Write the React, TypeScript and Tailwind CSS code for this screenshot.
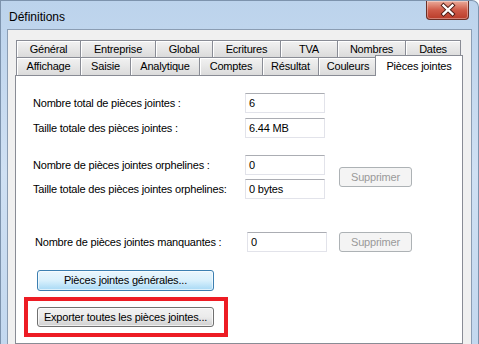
const font = { fontFamily: '"Liberation Sans", Arial, sans-serif' };

const row1 = [
  ["Général", 64],
  ["Entreprise", 75],
  ["Global", 57],
  ["Ecritures", 68],
  ["TVA", 57],
  ["Nombres", 68],
  ["Dates", 56],
] as const;

const row2 = [
  ["Affichage", 64],
  ["Saisie", 50],
  ["Analytique", 69],
  ["Comptes", 63],
  ["Résultat", 56],
  ["Couleurs", 59],
] as const;

function Tab({ label, w, last, h }: { label: string; w: number; last?: boolean; h: string }) {
  return (
    <div
      className={`flex ${h} items-center justify-center border-l border-t border-[#898c95] bg-gradient-to-b from-[#f2f2f2] to-[#dbdbdb] shadow-[inset_1px_1px_0_#ffffff] ${last ? "border-r" : ""}`}
      style={{ width: w }}
    >
      {label}
    </div>
  );
}

function Field({ value }: { value: string }) {
  return (
    <div className="flex h-[20px] w-[80px] items-center border border-[#e2e3ea] border-t-[#abadb3] bg-white pl-[3px]">
      {value}
    </div>
  );
}

function Disabled() {
  return (
    <div className="flex h-[20px] w-[73px] items-center justify-center rounded-[3px] border border-[#adb2b5] bg-[#f4f4f4] text-[#9a9a9a]">
      Supprimer
    </div>
  );
}

function Label({ text, w = 212 }: { text: string; w?: number }) {
  return <div style={{ width: w }}>{text}</div>;
}

export default function App() {
  return (
    <div
      className="flex h-[344px] w-[479px] flex-col overflow-hidden rounded-tr-[7px] border-l border-t border-r border-[#7d93ad] bg-gradient-to-b from-[#bcd3ec] via-[#cfe0f3] to-[#c3d8ef] text-[11px] tracking-[-0.2px] text-black"
      style={font}
    >
      <div className="flex h-[28px] items-start pl-[8px] pr-[9px]">
        <div className="mt-[7px] text-[12px] tracking-normal">Définitions</div>
        <div className="ml-auto h-[19px] w-[43px] overflow-hidden rounded-b-[4px] border border-t-0 border-[#6b2f26] bg-gradient-to-b from-[#e9ab9b] via-[#cf5a48] to-[#b93b29] shadow-[inset_0_0_0_1px_rgba(255,255,255,0.35)]">
          <svg width="43" height="19" viewBox="0 0 43 19">
            <path d="M16.5 4.5 L25.5 13 M25.5 4.5 L16.5 13" stroke="#4a1a14" strokeWidth="4.2" strokeLinecap="square" />
            <path d="M16.5 4.5 L25.5 13 M25.5 4.5 L16.5 13" stroke="#ffffff" strokeWidth="2.4" strokeLinecap="square" />
          </svg>
        </div>
      </div>

      <div className="ml-[6px] mr-[6px] flex flex-1 flex-col border-l border-t border-r border-[#8b9db3] bg-[#f0f0f0] pl-[7px] pr-[8px] pt-[10px]">
        <div className="pl-[1px]">
          <div className="flex">
            {row1.map(([l, w], i) => (
              <Tab key={l} label={l} w={w} h="h-[17px]" last={i === row1.length - 1} />
            ))}
          </div>
          <div className="flex h-[18px] items-end">
            {row2.map(([l, w]) => (
              <Tab key={l} label={l} w={w} h="h-[18px]" />
            ))}
            <div className="relative z-10 -ml-[2px] mb-[-1px] flex h-[21px] w-[88px] items-start justify-center border-l border-t border-r border-[#898c95] bg-white pt-[2px]">
              Pièces jointes
            </div>
          </div>
        </div>

        <div className="flex flex-1 flex-col border border-[#898c95] bg-white">
          <div className="ml-[17px] mt-[17px] flex flex-col gap-[5px]">
            <div className="flex items-center">
              <Label text="Nombre total de pièces jointes :" />
              <Field value="6" />
            </div>
            <div className="flex items-center">
              <Label text="Taille totale des pièces jointes :" />
              <Field value="6.44 MB" />
            </div>
          </div>

          <div className="ml-[17px] mt-[17px] flex items-center">
            <div className="flex flex-col gap-[4px]">
              <div className="flex items-center">
                <Label text="Nombre de pièces jointes orphelines :" />
                <Field value="0" />
              </div>
              <div className="flex items-center">
                <Label text="Taille totale des pièces jointes orphelines:" />
                <Field value="0 bytes" />
              </div>
            </div>
            <div className="ml-[14px]">
              <Disabled />
            </div>
          </div>

          <div className="ml-[19px] mt-[33px] flex items-center">
            <Label text="Nombre de pièces jointes manquantes :" />
            <Field value="0" />
            <div className="ml-[12px]">
              <Disabled />
            </div>
          </div>

          <div className="ml-[21px] mt-[18px] flex h-[21px] w-[177px] items-center justify-center rounded-[3px] border border-[#3c7fb1] bg-gradient-to-b from-[#eaf6fd] via-[#d9f0fc] to-[#a7d9f5] shadow-[inset_0_0_0_1px_rgba(255,255,255,0.6)]">
            Pièces jointes générales...
          </div>

          <div className="ml-[8px] mt-[6px] w-[204px] border-4 border-[#ed1c24] pb-[6px] pl-[9px] pt-[6px]">
            <div className="flex h-[20px] w-[177px] items-center justify-center rounded-[3px] border border-[#707070] bg-gradient-to-b from-[#f2f2f2] via-[#ebebeb] to-[#cfcfcf] shadow-[inset_0_0_0_1px_rgba(255,255,255,0.7)]">
              Exporter toutes les pièces jointes...
            </div>
          </div>
        </div>
      </div>
    </div>
  );
}
